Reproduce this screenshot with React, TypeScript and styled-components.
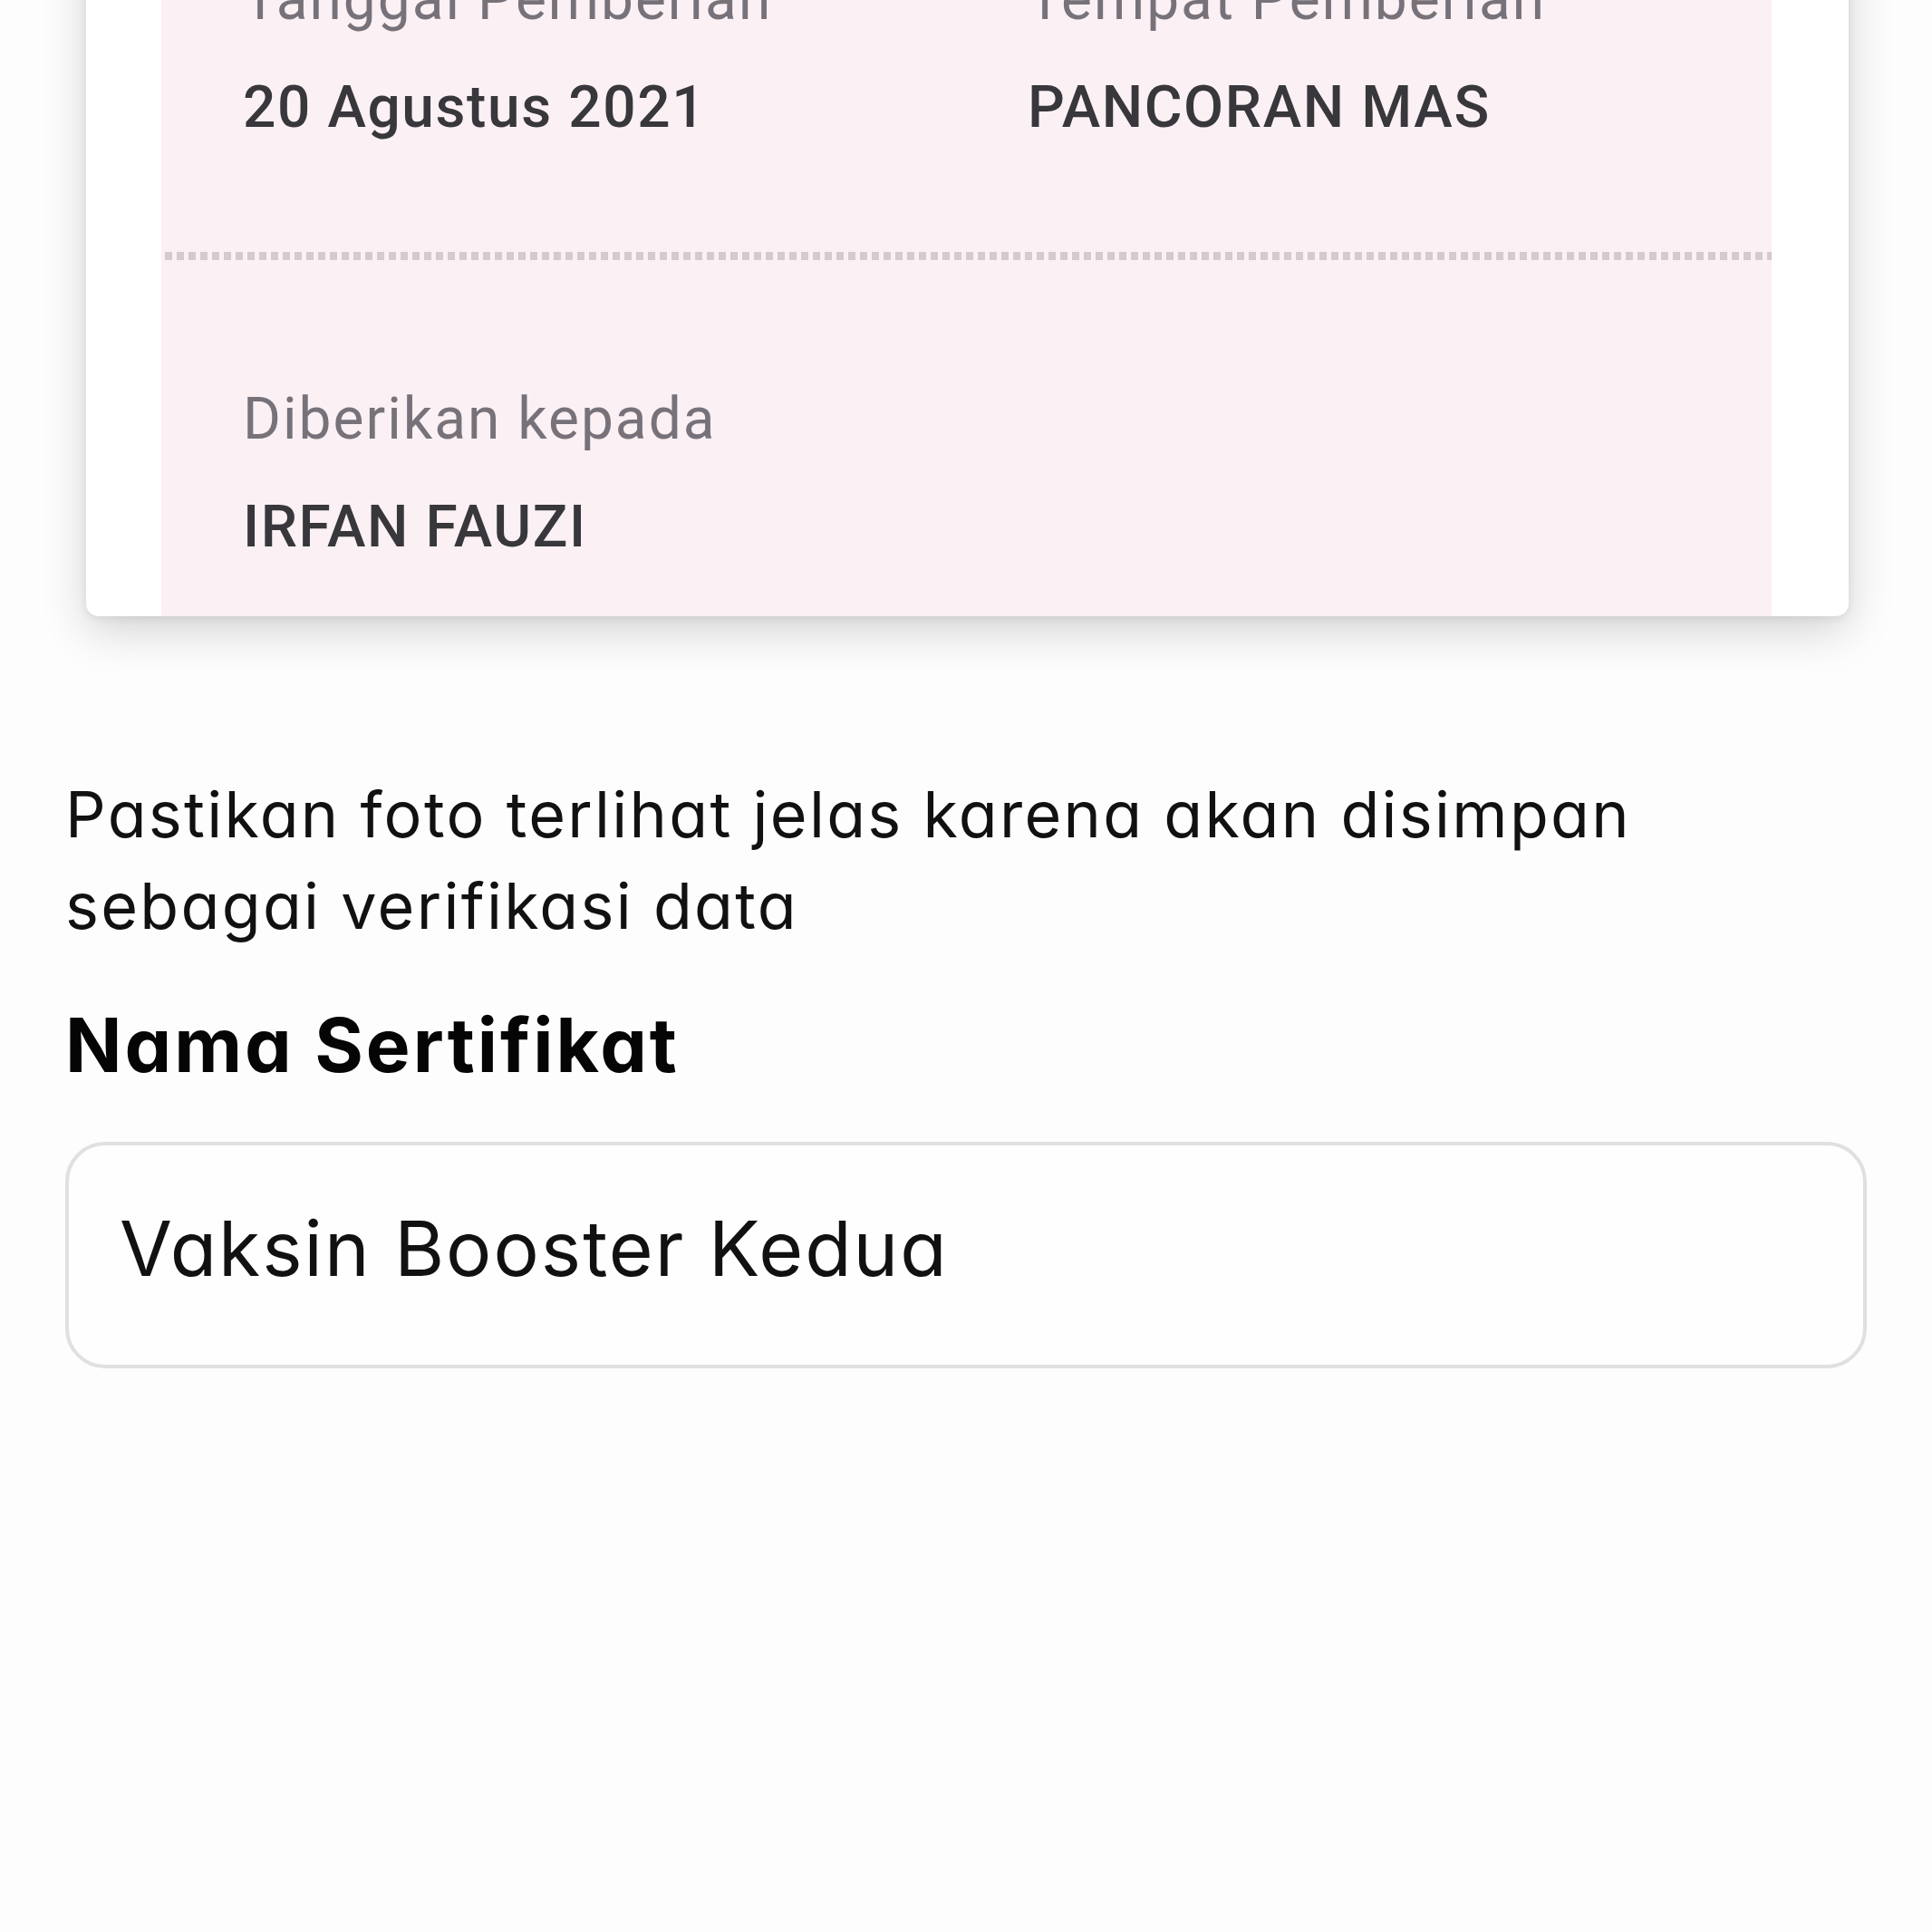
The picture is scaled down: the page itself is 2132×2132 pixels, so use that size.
import React from "react";
import styled, { createGlobalStyle } from "styled-components";

const Global = createGlobalStyle`
  html, body { margin: 0; padding: 0; background: #fdfdfd; }
  body { font-family: Inter, "Noto Sans", sans-serif; overflow: hidden; }
  * { box-sizing: border-box; }
`;

const Screen = styled.div`
  width: 2132px;
  height: 2132px;
  overflow: hidden;
  background: #fdfdfd;
`;

const ScrollContent = styled.main`
  margin-top: -98px;
  padding: 0 72px 0 72px;
  display: flex;
  flex-direction: column;
`;

const Card = styled.section`
  margin: 0 20px 0 23px;
  padding: 0 85px 0 83px;
  background: #ffffff;
  border-radius: 14px;
  box-shadow: 0 16px 50px rgba(0, 0, 0, 0.17), 0 3px 10px rgba(0, 0, 0, 0.07);
`;

const CertPanel = styled.div`
  background: #fbf0f3;
  padding: 60px 0 60px;
  display: flex;
  flex-direction: column;
`;

const FieldRow = styled.div<{ $cols?: string }>`
  display: grid;
  grid-template-columns: ${(p) => p.$cols ?? "1fr"};
  padding: 0 90px;
`;

const Field = styled.div`
  display: flex;
  flex-direction: column;
  gap: 43px;
`;

const Label = styled.div`
  font-family: Roboto, "Noto Sans", sans-serif;
  font-size: 64px;
  line-height: 76px;
  font-weight: 400;
  color: #77727a;
  letter-spacing: 2px;
  white-space: nowrap;
`;

const Value = styled.div`
  font-family: Roboto, "Noto Sans", sans-serif;
  font-size: 64px;
  line-height: 76px;
  font-weight: 500;
  color: #38373b;
  letter-spacing: 1.6px;
  white-space: nowrap;
`;

const DottedDivider = styled.div`
  height: 9px;
  margin: 121px 0 138px 4px;
  background-image: repeating-linear-gradient(
    to right,
    #d6c9cf 0px,
    #d6c9cf 8px,
    transparent 8px,
    transparent 13px
  );
`;

const Hint = styled.p`
  margin: 168px 0 0 0;
  font-family: Inter, "Noto Sans", sans-serif;
  font-feature-settings: "cv11" 1;
  font-size: 70px;
  line-height: 101px;
  font-weight: 400;
  letter-spacing: 2.3px;
  color: #111111;
  max-width: 1840px;
`;

const SectionTitle = styled.h2`
  margin: 56px 0 0 0;
  font-family: Inter, "Noto Sans", sans-serif;
  font-feature-settings: "cv11" 1;
  font-size: 82px;
  line-height: 96px;
  font-weight: 700;
  letter-spacing: 3px;
  color: #050505;
`;

const TextField = styled.input`
  margin-top: 58px;
  width: 100%;
  height: 250px;
  padding: 0 40px 16px 56px;
  border: 4px solid #e0e0e0;
  border-radius: 44px;
  background: #fefefe;
  font-family: Inter, "Noto Sans", sans-serif;
  font-feature-settings: "cv11" 1;
  font-size: 84px;
  font-weight: 400;
  letter-spacing: 2px;
  color: #111111;
  outline: none;
`;

export default function App() {
  return (
    <Screen>
      <Global />
      <ScrollContent>
        <Card>
          <CertPanel>
            <FieldRow $cols="866px 1fr">
              <Field>
                <Label>Tanggal Pemberian</Label>
                <Value>20 Agustus 2021</Value>
              </Field>
              <Field>
                <Label>Tempat Pemberian</Label>
                <Value>PANCORAN MAS</Value>
              </Field>
            </FieldRow>
            <DottedDivider />
            <FieldRow>
              <Field>
                <Label>Diberikan kepada</Label>
                <Value>IRFAN FAUZI</Value>
              </Field>
            </FieldRow>
          </CertPanel>
        </Card>
        <Hint>
          Pastikan foto terlihat jelas karena akan disimpan sebagai verifikasi
          data
        </Hint>
        <SectionTitle>Nama Sertifikat</SectionTitle>
        <TextField readOnly value="Vaksin Booster Kedua" />
      </ScrollContent>
    </Screen>
  );
}
